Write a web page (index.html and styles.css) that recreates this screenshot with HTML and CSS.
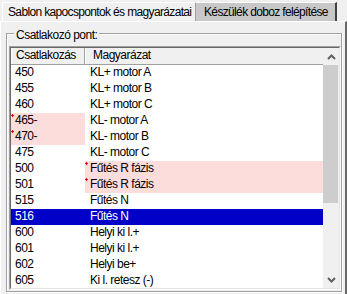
FILE: index.html
```html
<!DOCTYPE html>
<html lang="hu">
<head>
    <meta charset="utf-8">
    <link rel="stylesheet" href="styles.css">
</head>
<body>
    <div class="tabs">
        <div class="tab active">Sablon kapocspontok és magyarázatai</div>
        <div class="tab">Készülék doboz felépítése</div>
    </div>

    <div class="panel">
        <div class="group">
            <div class="group-title">Csatlakozó pont:</div>
            <div class="list">
                <div class="list-inner">
                    <div class="list-body">
                        <div class="list-header">
                            <div class="col1">Csatlakozás</div>
                            <div class="col2">Magyarázat</div>
                        </div>
                        <div class="row"><div class="col1">450</div><div class="col2">KL+ motor A</div></div>
                        <div class="row"><div class="col1">455</div><div class="col2">KL+ motor B</div></div>
                        <div class="row"><div class="col1">460</div><div class="col2">KL+ motor C</div></div>
                        <div class="row"><div class="col1 pink mark">465-</div><div class="col2">KL- motor A</div></div>
                        <div class="row"><div class="col1 pink mark">470-</div><div class="col2">KL- motor B</div></div>
                        <div class="row"><div class="col1">475</div><div class="col2">KL- motor C</div></div>
                        <div class="row"><div class="col1">500</div><div class="col2 pink mark">Fűtés R fázis</div></div>
                        <div class="row"><div class="col1">501</div><div class="col2 pink mark">Fűtés R fázis</div></div>
                        <div class="row"><div class="col1">515</div><div class="col2">Fűtés N</div></div>
                        <div class="row selected"><div class="col1">516</div><div class="col2">Fűtés N</div></div>
                        <div class="row"><div class="col1">600</div><div class="col2">Helyi ki l.+</div></div>
                        <div class="row"><div class="col1">601</div><div class="col2">Helyi ki l.+</div></div>
                        <div class="row"><div class="col1">602</div><div class="col2">Helyi be+</div></div>
                        <div class="row"><div class="col1">605</div><div class="col2">Ki l. retesz (-)</div></div>
                    </div>

                    <div class="scrollbar">
                        <div class="sb-btn">
                            <svg width="9" height="6" viewBox="0 0 9 6"><path d="M1 5 L4.5 1.5 L8 5" fill="none" stroke="#606060" stroke-width="2"/></svg>
                        </div>
                        <div class="sb-thumb"></div>
                        <div class="sb-track"></div>
                        <div class="sb-btn">
                            <svg width="9" height="6" viewBox="0 0 9 6"><path d="M1 1 L4.5 4.5 L8 1" fill="none" stroke="#606060" stroke-width="2"/></svg>
                        </div>
                    </div>
                </div>
            </div>
        </div>
    </div>
</body>
</html>
```

FILE: styles.css
```css
/* Windows style form: tab page with list */
body {
    margin: 0;
    width: 347px;
    height: 294px;
    overflow: hidden;
    background: #f0f0f0;
    font-family: "Liberation Sans", Arial, sans-serif;
    font-size: 12px;
    letter-spacing: -0.5px;
    color: #000;
}

.tabs {
    display: flex;
    height: 21px;
    padding: 2px 0 0 2px;
    box-sizing: border-box;
}

.tab {
    height: 19px;
    box-sizing: border-box;
    padding: 2px 0 0 5px;
    line-height: 14px;
    letter-spacing: -0.65px;
    white-space: nowrap;
    overflow: hidden;
}

.tab.active {
    width: 194px;
    background: #f0f0f0;
    border-left: 1px solid #fff;
    border-top: 1px solid #fff;
    border-right: 1px solid #a0a0a0;
}

.tab:not(.active) {
    width: 141px;
    padding-left: 8px;
    background: #c8c8c8;
    border-top: 1px solid #fff;
    border-right: 2px solid #404040;
}

.panel {
    height: 273px;
    box-sizing: border-box;
    border-left: 1px solid #fff;
    border-top: 1px solid #fff;
    border-right: 2px solid #696969;
    padding: 11px 2px 0 5px;
}

.group {
    width: 336px;
    height: 259px;
    box-sizing: border-box;
    border: 1px solid #a0a0a0;
    box-shadow: inset 1px 1px #fff, 1px 1px #fff;
    padding: 0 0 0 2px;
}

.group-title {
    width: fit-content;
    margin: -6px 0 0 5px;
    padding: 0 2px;
    line-height: 14px;
    background: #f0f0f0;
}

.list {
    margin-top: 4px;
    width: 332px;
    height: 244px;
    box-sizing: border-box;
    border: 1px solid;
    border-color: #a0a0a0 #fff #fff #a0a0a0;
}

.list-inner {
    display: flex;
    height: 100%;
    box-sizing: border-box;
    border: 1px solid;
    border-color: #696969 #e3e3e3 #e3e3e3 #696969;
}

.list-body {
    width: 312px;
    background: #fff;
    overflow: hidden;
}

.list-header {
    display: flex;
    height: 17px;
    box-sizing: border-box;
    background: #f0f0f0;
    border-bottom: 1px solid #a0a0a0;
    line-height: 15px;
}

.list-header .col1 {
    border-left: 1px solid #fff;
    border-right: 1px solid #a0a0a0;
    box-sizing: border-box;
}

.list-header .col2 {
    padding-left: 7px;
    border-left: 1px solid #fff;
}

.row {
    display: flex;
    height: 16px;
    line-height: 14px;
}

.col1 {
    width: 74px;
    flex: none;
    padding-left: 4px;
    box-sizing: border-box;
}

.col2 {
    flex: 1;
    padding-left: 5px;
    white-space: nowrap;
}

.pink {
    background: #fddcdc;
}

.mark {
    position: relative;
}

.mark::before {
    content: "";
    position: absolute;
    left: 0;
    top: 1px;
    width: 3px;
    height: 3px;
    background:
        linear-gradient(#f00, #f00) center / 3px 1px no-repeat,
        linear-gradient(#f00, #f00) center / 1px 3px no-repeat;
}

.row.selected {
    background: #0000c8;
    color: #fff;
}

.scrollbar {
    width: 16px;
    display: flex;
    flex-direction: column;
    background: #f0f0f0;
}

.sb-btn {
    height: 17px;
    display: flex;
    align-items: center;
    justify-content: center;
}

.sb-thumb {
    height: 138px;
    width: 15px;
    background: #cdcdcd;
}

.sb-track {
    flex: 1;
}
```
